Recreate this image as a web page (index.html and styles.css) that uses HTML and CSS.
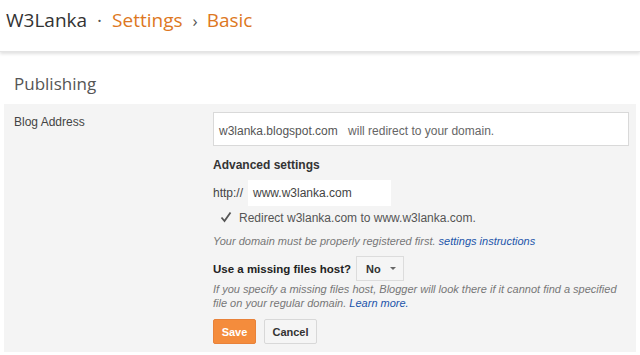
FILE: index.html
```html
<!DOCTYPE html>
<html>
<head>
<meta charset="utf-8">
<link rel="stylesheet" href="styles.css">
</head>
<body>
<header class="topbar">
  <span class="blog">W3Lanka</span>
  <span class="sep">·</span>
  <span class="crumb">Settings</span>
  <span class="sep arrow">›</span>
  <span class="crumb">Basic</span>
</header>
<h2 class="section-title">Publishing</h2>
<div class="panel">
  <div class="label">Blog Address</div>
  <div class="content">
    <div class="address-box">
      <span class="addr">w3lanka.blogspot.com</span>
      <span class="addr-note">will redirect to your domain.</span>
    </div>
    <div class="adv-title">Advanced settings</div>
    <div class="http-row">
      <span class="http">http://</span>
      <span class="domain-input">www.w3lanka.com</span>
    </div>
    <div class="check-row">
      <svg class="check" width="12" height="12" viewBox="0 0 12 12"><path d="M1.5 6.5 L4.5 10 L10.5 1.5" fill="none" stroke="#555" stroke-width="1.8"/></svg>
      <span>Redirect w3lanka.com to www.w3lanka.com.</span>
    </div>
    <div class="hint">Your domain must be properly registered first. <a class="link">settings instructions</a></div>
    <div class="missing-row">
      <span class="missing-label">Use a missing files host?</span>
      <span class="dropdown">No <span class="caret"></span></span>
    </div>
    <p class="hint hint2"><span>If you specify a missing files host, Blogger will look there if it cannot find a specified</span><br><span>file on your regular domain.</span> <a class="link">Learn more.</a></p>
    <div class="buttons">
      <button class="btn save">Save</button>
      <button class="btn cancel">Cancel</button>
    </div>
  </div>
</div>
</body>
</html>
```
FILE: styles.css
```css
html, body { margin: 0; padding: 0; background: #fff; }
body { width: 640px; height: 355px; overflow: hidden; font-family: Arial, "Liberation Sans", sans-serif; }
.topbar {
  height: 52px;
  box-sizing: border-box;
  padding: 7px 0 0 6px;
  font-family: "Open Sans", sans-serif;
  font-size: 19px;
  color: #333;
  border-bottom: 1px solid #e4e4e4;
  box-shadow: 0 2px 3px rgba(0,0,0,0.12);
  display: flex;
  align-items: baseline;
}
.topbar .sep { margin: 0 10px; color: #555; }
.topbar .arrow { font-size: 17px; margin: 0 9px 0 10px; }
.topbar .crumb { color: #dd7722; }
.section-title {
  margin: 0;
  padding: 20px 0 0 14px;
  height: 32px;
  font-family: "Open Sans", sans-serif;
  font-weight: normal;
  font-size: 17px;
  color: #555;
}
.panel {
  margin: 0 4px 0 4px;
  background: #f4f4f4;
  display: flex;
  padding: 8px 0 0 10px;
  height: 248px;
  box-sizing: border-box;
}
.label { width: 199px; font-size: 12px; color: #444; padding-top: 3px; }
.content { width: 416px; font-size: 12px; color: #444; }
.address-box {
  height: 34px;
  box-sizing: border-box;
  background: #fff;
  border: 1px solid #d9d9d9;
  padding: 11px 0 0 5px;
  color: #555;
}
.addr-note { margin-left: 7px; color: #666; }
.adv-title { font-weight: bold; font-size: 12px; color: #333; margin-top: 12px; }
.http-row { display: flex; align-items: center; margin-top: 8px; }
.http { width: 35px; }
.domain-input {
  width: 143px;
  height: 26px;
  box-sizing: border-box;
  background: #fff;
  padding: 6px 0 0 5px;
  color: #444;
}
.check-row { display: flex; align-items: center; margin-top: 5px; padding-left: 7px; color: #555; font-size: 12px; }
.check { margin-right: 7px; margin-top: -3px; }
.hint { font-style: italic; font-size: 11px; color: #777; margin-top: 10px; }
.link { color: #2255aa; }
.missing-row { display: flex; align-items: center; margin-top: 9px; }
.missing-label { font-weight: bold; font-size: 11.5px; color: #222; white-space: nowrap; flex-shrink: 0; margin-right: 5px; }
.dropdown {
  width: 48px; height: 25px; box-sizing: border-box;
  border: 1px solid #dcdcdc;
  background: #f5f5f5;
  font-weight: bold; font-size: 11px; color: #333;
  display: flex; align-items: center; padding-left: 9px;
}
.caret { display: inline-block; margin-left: 9px; border-left: 3px solid transparent; border-right: 3px solid transparent; border-top: 3px solid #666; }
.hint2 { margin: 0; padding-top: 1px; line-height: 14px; white-space: nowrap; }
.buttons { display: flex; gap: 8px; margin-top: 9px; }
.btn {
  height: 25px; box-sizing: border-box;
  font-family: Arial, "Liberation Sans", sans-serif;
  font-weight: bold; font-size: 11px;
  border-radius: 2px; padding: 0;
}
.save { width: 43px; background: #f48c3c; border: 1px solid #e8823a; color: #fff; }
.cancel { width: 53px; background: #f5f5f5; border: 1px solid #d8d8d8; color: #333; }
```
